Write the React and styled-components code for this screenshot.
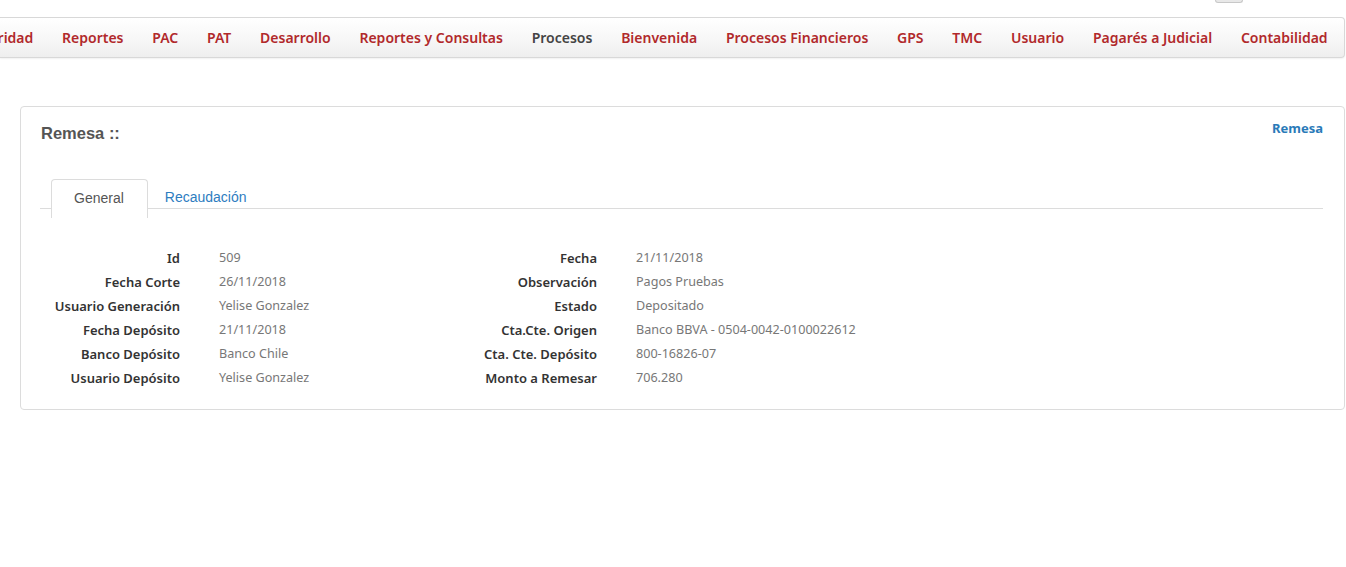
import React from 'react'
import styled, { createGlobalStyle } from 'styled-components'

const GlobalStyle = createGlobalStyle`
  body {
    margin: 0;
    background: #fff;
    font-family: "Noto Sans", "Liberation Sans", sans-serif;
  }
`

const TopBar = styled.div`
  height: 17px;
  display: flex;
  justify-content: flex-end;
  padding-right: 103px;
`

const TopStub = styled.div`
  width: 26px;
  height: 2px;
  border: 1px solid #c8c8c8;
  border-top: none;
  border-radius: 0 0 4px 4px;
  background: #e8e8e8;
`

const NavBar = styled.nav`
  height: 39px;
  margin-right: 1px;
  border: 1px solid #d8d8d8;
  border-left: none;
  border-radius: 0 4px 4px 0;
  background: linear-gradient(to bottom, #ffffff 0%, #f6f6f6 60%, #eeeeee 100%);
  box-shadow: 0 1px 2px rgba(0, 0, 0, 0.06);
  display: flex;
  justify-content: flex-end;
  align-items: center;
  overflow: hidden;
  padding-right: 2px;
`

const NavItem = styled.a`
  flex-shrink: 0;
  padding: 0 14.38px;
  font-size: 14px;
  font-weight: 600;
  white-space: nowrap;
  text-decoration: none;
  color: ${p => (p.$active ? '#444' : '#b1292b')};
`

const Card = styled.section`
  margin: 48px 1px 0 20px;
  border: 1px solid #dcdcdc;
  border-radius: 4px;
  padding: 16px 21px 19px 19px;
`

const CardHeader = styled.div`
  display: flex;
  justify-content: space-between;
  align-items: flex-start;
  padding-left: 1px;
`

const Title = styled.h2`
  margin: 0;
  font-family: "Liberation Sans", Arial, sans-serif;
  font-size: 16.5px;
  line-height: 20px;
  font-weight: 700;
  color: #555;
`

const HeaderLink = styled.a`
  font-size: 13px;
  font-weight: 700;
  line-height: 12px;
  margin-top: -1px;
  color: #2a7ab8;
  text-decoration: none;
`

const TabList = styled.div`
  margin-top: 36px;
  display: flex;
  align-items: flex-start;
  padding-left: 11px;
  height: 29px;
  border-bottom: 1px solid #dcdcdc;
`

const Tab = styled.div`
  box-sizing: border-box;
  height: ${p => (p.$active ? '39px' : '29px')};
  padding: ${p => (p.$active ? '10px 23px 0 22px' : '9px 15px 0 16px')};
  font-family: "Liberation Sans", Arial, sans-serif;
  font-size: 14px;
  line-height: 16px;
  background: #fff;
  color: ${p => (p.$active ? '#555' : '#2e7dbf')};
  border: 1px solid ${p => (p.$active ? '#dcdcdc' : 'transparent')};
  border-bottom: none;
  border-radius: 4px 4px 0 0;
  position: relative;
  z-index: 1;
`

const Details = styled.div`
  margin-top: 37px;
  margin-left: -19px;
  display: grid;
  grid-template-columns: 417px 417px;
  align-items: start;
`

const Column = styled.dl`
  margin: 0;
  display: grid;
  grid-template-columns: 159px 1fr;
  column-gap: 39px;
  font-size: 13px;
  line-height: 24px;
`

const Label = styled.dt`
  text-align: right;
  font-weight: 600;
  color: #333;
  white-space: nowrap;
`

const Value = styled.dd`
  margin: 0;
  font-size: 12.6px;
  color: #777;
  white-space: nowrap;
`

const menu = [
  'Seguridad',
  'Reportes',
  'PAC',
  'PAT',
  'Desarrollo',
  'Reportes y Consultas',
  'Procesos',
  'Bienvenida',
  'Procesos Financieros',
  'GPS',
  'TMC',
  'Usuario',
  'Pagarés a Judicial',
  'Contabilidad',
]

const left = [
  ['Id', '509'],
  ['Fecha Corte', '26/11/2018'],
  ['Usuario Generación', 'Yelise Gonzalez'],
  ['Fecha Depósito', '21/11/2018'],
  ['Banco Depósito', 'Banco Chile'],
  ['Usuario Depósito', 'Yelise Gonzalez'],
]

const right = [
  ['Fecha', '21/11/2018'],
  ['Observación', 'Pagos Pruebas'],
  ['Estado', 'Depositado'],
  ['Cta.Cte. Origen', 'Banco BBVA - 0504-0042-0100022612'],
  ['Cta. Cte. Depósito', '800-16826-07'],
  ['Monto a Remesar', '706.280'],
]

function InfoColumn({ rows }) {
  return (
    <Column>
      {rows.map(([label, value]) => (
        <React.Fragment key={label}>
          <Label>{label}</Label>
          <Value>{value}</Value>
        </React.Fragment>
      ))}
    </Column>
  )
}

export default function App() {
  return (
    <>
      <GlobalStyle />
      <TopBar>
        <TopStub />
      </TopBar>
      <NavBar>
        {menu.map(item => (
          <NavItem key={item} href="#" $active={item === 'Procesos'}>
            {item}
          </NavItem>
        ))}
      </NavBar>
      <Card>
        <CardHeader>
          <Title>Remesa ::</Title>
          <HeaderLink href="#">Remesa</HeaderLink>
        </CardHeader>
        <TabList>
          <Tab $active>General</Tab>
          <Tab>Recaudación</Tab>
        </TabList>
        <Details>
          <InfoColumn rows={left} />
          <InfoColumn rows={right} />
        </Details>
      </Card>
    </>
  )
}
